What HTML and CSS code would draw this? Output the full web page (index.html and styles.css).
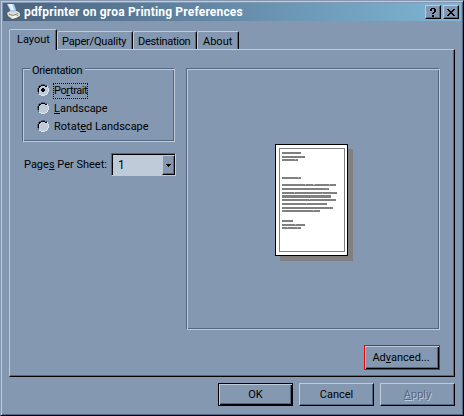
FILE: index.html
```html
<!DOCTYPE html>
<html lang="en">
<head>
<meta charset="utf-8">
<title>pdfprinter on groa Printing Preferences</title>
<link rel="stylesheet" href="styles.css">
</head>
<body>
<main class="window">
  <header class="titlebar">
    <svg class="printer" width="16" height="16" viewBox="0 0 16 16">
      <path fill="#555f68" d="M0 9l4-3h8l3 3v4l-3 2-6 1-5-3z"/>
      <path fill="#dcdcd6" d="M1 9l3-2h7l3 2v3l-4 2-4 1-4-3z"/>
      <path fill="#a9cff5" d="M1 0h7l2 6-1 2H5z"/>
      <path fill="#e6f2ff" d="M2 0h4l2 6H5z"/>
      <path fill="none" stroke="#858985" d="M3 10l4 1.500 5-2M6 13.500l6-2"/>
      <path fill="#f8f8f2" d="M5 12.500l5-1 2 1-5 2z"/>
    </svg>
    <h1 class="title">pdfprinter on groa Printing Preferences</h1>
    <button class="caption" aria-label="Help"><svg width="8" height="9" viewBox="0 0 8 9" shape-rendering="crispEdges"><path d="M2 0h4v1h1v3H6v1H5v1H3V5h1V4h1V1H3v2H1V1h1zM3 7h2v2H3z"/></svg></button>
    <button class="caption" aria-label="Close"><svg width="8" height="7" viewBox="0 0 8 7" shape-rendering="crispEdges"><path d="M0 0h2v1h1v1h2V1h1V0h2v1H7v1H6v1H5v1h1v1h1v1h1v1H6V6H5V5H3v1H2v1H0V6h1V5h1V4h1V3H2V2H1V1H0z"/></svg></button>
  </header>
  <nav class="tabs">
    <div class="tab active"><span>Layout</span></div>
    <div class="tab paper"><span>Paper/Quality</span></div>
    <div class="tab destination"><span>Destination</span></div>
    <div class="tab about"><span>About</span></div>
  </nav>
  <section class="panel">
    <div class="columns">
      <div class="settings">
        <fieldset class="group">
          <legend>Orientation</legend>
          <label class="option"><svg class="radio" width="12" height="12" viewBox="0 0 12 12" shape-rendering="crispEdges"><use href="#radio"/><path d="M5 4h2v1h1v2H7v1H5V7H4V5h1z"/></svg><span class="focus">Po<u>r</u>trait</span></label>
          <label class="option"><svg class="radio" width="12" height="12" viewBox="0 0 12 12" shape-rendering="crispEdges"><use href="#radio"/></svg><span class="caption-text"><u>L</u>andscape</span></label>
          <label class="option"><svg class="radio" width="12" height="12" viewBox="0 0 12 12" shape-rendering="crispEdges"><defs><g id="radio">
            <path fill="#bfcbd8" d="M4 1h4v1h2v2h1v4h-1v2H8v1H4v-1H2V8H1V4h1V2h2z"/>
            <path fill="#536780" d="M4 0h4v1h2v1H8V1H4v1H2v2H1v4H0V4h1V2h1V1h2zM1 8h1v2H1z"/>
            <path d="M4 1h4v1h2v1H8V2H4v1H3v1H2v4H1V4h1V2h2z"/>
            <path fill="#dce5ee" d="M10 2h1v2h1v4h-1v2h-1v1H8v1H4v-1H2v-1h2v1h4v-1h2V8h1V4h-1z"/>
          </g></defs><use href="#radio"/></svg><span class="caption-text">Rotat<u>e</u>d Landscape</span></label>
        </fieldset>
        <div class="sheet">
          <span>Page<u>s</u> Per Sheet:</span>
          <div class="select"><span class="value">1</span><span class="drop"><svg width="5" height="3" viewBox="0 0 5 3" shape-rendering="crispEdges"><path d="M0 0h5v1H4v1H3v1H2V2H1V1H0z"/></svg></span></div>
        </div>
      </div>
      <div class="preview">
        <svg width="78" height="117" viewBox="0 0 78 117" shape-rendering="crispEdges">
          <path fill="#808080" d="M5 5h73v112H5z"/>
          <path d="M0 0h73v112H0z"/>
          <path fill="#fff" d="M1 1h71v110H1z"/>
          <path fill="none" stroke="#808080" d="M4.500 4.500h65v103h-65z"/>
          <path fill="#808080" d="M7 8h19v2H7zM7 12h23v2H7zM7 15h16v2H7zM7 33h19v2H7zM7 40h54v2H7zM7 44h47v2H7zM7 48h55v2H7zM7 51h49v3H7zM7 55h54v2H7zM7 59h45v2H7zM7 63h51v2H7zM7 66h38v2H7zM7 76h11v2H7zM7 80h23v2H7zM7 83h19v2H7z"/>
          <path fill="#c0c0c0" d="M20 15h1v1h-1zM23 33h1v1h-1zM30 40h1v1h-1zM38 40h2v1h-2zM54 40h1v1h-1zM51 44h1v1h-1zM19 48h1v1h-1zM47 49h1v1h-1zM34 55h1v1h-1zM31 59h1v1h-1zM38 66h1v1h-1zM20 80h1v1h-1zM12 83h1v1h-1zM22 83h1v1h-1z"/>
        </svg>
      </div>
    </div>
    <button class="button advanced">Ad<u>v</u>anced...</button>
  </section>
  <footer class="actions">
    <button class="button default">OK</button>
    <button class="button">Cancel</button>
    <button class="button" disabled><u>A</u>pply</button>
  </footer>
</main>
</body>
</html>
```
FILE: styles.css
```css
:root {
  --face: #8499b1;
  --light: #bfcbd9;
  --dark: #536780;
}
* { box-sizing: border-box; }
body {
  margin: 0;
  font: 11px/14px Roboto, "Liberation Sans", sans-serif;
  color: #000;
}
button { font: inherit; color: inherit; padding: 0; border-radius: 0; }
u { text-decoration-thickness: 1px; text-underline-offset: 1px; text-decoration-skip-ink: none; }
span { white-space: nowrap; }
.window {
  width: 464px;
  height: 416px;
  background: var(--face);
  border: 1px solid;
  border-color: var(--face) #000 #000 var(--face);
  box-shadow: inset 1px 1px var(--light), inset -1px -1px var(--dark);
  padding: 2px;
}
.titlebar {
  display: flex;
  align-items: center;
  width: 458px;
  height: 18px;
  padding: 0 2px;
  background: linear-gradient(90deg, #4b637e, #7fb5d5);
}
.printer { margin-left: 1px; }
.title {
  margin: 0 auto 0 2px;
  font: bold 12px/18px Roboto, "Liberation Sans", sans-serif;
  letter-spacing: .18px;
  color: #fff;
  white-space: nowrap;
}
.caption {
  width: 16px;
  height: 14px;
  margin-left: 2px;
  display: flex;
  align-items: center;
  justify-content: center;
  background: var(--face);
  border: 1px solid;
  border-color: var(--light) #000 #000 var(--light);
  box-shadow: inset -1px -1px var(--dark);
}
.tabs {
  display: flex;
  align-items: flex-end;
  height: 21px;
  margin: 8px 0 -1px 6px;
}
.tab {
  height: 18px;
  margin-bottom: 1px;
  padding: 3px 0 0 5px;
  border: 1px solid;
  border-width: 1px 1px 0 1px;
  border-color: var(--light) #000 transparent var(--light);
  border-radius: 2px 2px 0 0;
  box-shadow: inset -1px 0 var(--dark);
  background: var(--face);
}
.tab.active {
  width: 48px;
  height: 21px;
  margin-bottom: 0;
  padding: 3px 0 0 7px;
  position: relative;
}
.tab.paper { width: 76px; padding-left: 4px; letter-spacing: -.2px; }
.tab.destination { width: 64px; padding-left: 4px; letter-spacing: -.3px; }
.tab.about { width: 42px; }
.panel {
  width: 446px;
  height: 328px;
  margin-left: 6px;
  border: 1px solid;
  border-color: var(--light) #000 #000 var(--light);
  box-shadow: inset -1px -1px var(--dark);
  padding: 18px 14px 0 12px;
}
.columns { display: flex; gap: 10px; height: 262px; }
.settings { width: 154px; }
.group, .preview {
  border: 1px solid;
  border-color: var(--dark) var(--light) var(--light) var(--dark);
  box-shadow: inset 1px 1px var(--light), inset -1px -1px var(--dark);
}
.group {
  width: 153px;
  height: 74px;
  margin: 0;
  padding: 12px 0 0 14px;
  min-width: 0;
}
.group legend {
  float: left;
  width: 55px;
  height: 14px;
  margin: -18px 0 0 -7px;
  padding: 1px 0 0 2px;
  letter-spacing: -.35px;
  white-space: nowrap;
  background: var(--face);
}
.option {
  display: flex;
  align-items: center;
  clear: both;
  height: 18px;
}
.radio { margin-right: 5px; }
.caption-text { padding-top: 1px; }
.focus {
  width: 35px;
  height: 16px;
  margin: 1px 0 0 -1px;
  letter-spacing: -.4px;
  border: 1px dotted #000;
}
.sheet {
  display: flex;
  align-items: center;
  justify-content: space-between;
  height: 23px;
  margin-top: 11px;
  padding-left: 2px;
}
.select {
  display: flex;
  width: 65px;
  height: 23px;
  border: 1px solid;
  border-color: var(--dark) var(--light) var(--light) var(--dark);
  box-shadow: inset 1px 1px #000;
  background: #bfcbd8;
  padding: 1px 0 0 1px;
}
.value { flex: 1; padding: 3px 0 0 5px; font-size: 12px; }
.drop {
  display: flex;
  align-items: center;
  justify-content: center;
  width: 13px;
  background: var(--face);
  border: 1px solid;
  border-color: var(--light) #000 #000 var(--light);
  box-shadow: inset -1px -1px var(--dark);
}
.preview {
  width: 254px;
  display: flex;
  align-items: flex-start;
  padding: 75px 0 0 88px;
}
.button {
  width: 75px;
  height: 23px;
  background: var(--face);
  border: 1px solid;
  border-color: var(--light) #000 #000 var(--light);
  box-shadow: inset -1px -1px var(--dark);
}
.advanced {
  display: block;
  width: 76px;
  height: 25px;
  margin: 15px 0 0 auto;
  padding-right: 2px;
  border-color: red;
  box-shadow: inset 1px 1px var(--light), inset -1px -1px #000, inset -2px -2px var(--dark);
}
.default {
  border-color: #000;
  box-shadow: inset 1px 1px var(--light), inset -1px -1px #000, inset -2px -2px var(--dark);
}
.button:disabled { color: var(--dark); text-shadow: 1px 1px var(--light); }
.actions {
  display: flex;
  gap: 6px;
  margin: 6px 0 0 215px;
}
```
